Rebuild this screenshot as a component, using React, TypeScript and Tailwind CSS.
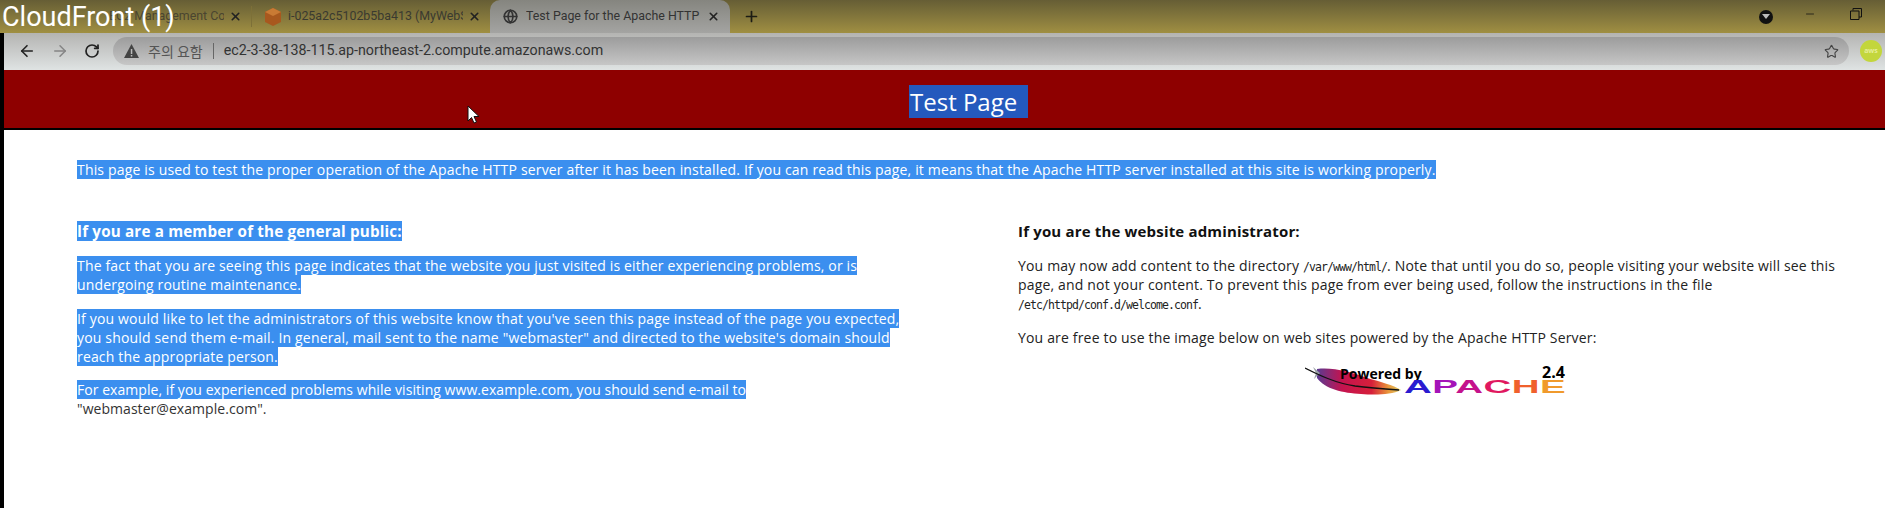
import React from "react";
import { ArrowLeft, ArrowRight, RotateCw, Star, X, Plus, Minus, Globe } from "lucide-react";

const sel = "bg-[#3b8fef] text-white";

function Feather() {
  return (
    <svg width="100" height="30" viewBox="0 0 100 30" className="absolute left-0 top-0">
      <defs>
        <linearGradient id="feather" x1="0" x2="1" y1="0" y2="0">
          <stop offset="0" stopColor="#5b3a92" />
          <stop offset="0.3" stopColor="#c4134f" />
          <stop offset="0.65" stopColor="#d6203a" />
          <stop offset="0.85" stopColor="#e9973a" />
          <stop offset="1" stopColor="#d8c868" />
        </linearGradient>
      </defs>
      <path d="M12 3 C28 1 46 6 62 12 C76 16 88 19 96 24 C86 29 70 29 56 28 C38 27 20 23 12 12 Z" fill="url(#feather)" />
      <path d="M8 1 L15 7 L9 13 L11 7 Z" fill="#9aa0a8" />
      <path d="M0 2 C14 9 30 17 50 20 C66 22 80 23 94 24" fill="none" stroke="#111" strokeWidth="1.3" />
    </svg>
  );
}

function ApacheLogo() {
  return (
    <div className="relative w-[262px] h-[30px] ml-[287px] mt-[19px]">
      <Feather />
      <span className="absolute left-[35px] top-[-1px] text-[14px] leading-[18px] font-bold tracking-normal text-black font-['Open_Sans',sans-serif]">Powered by</span>
      <span className="absolute left-[237px] top-[-3px] text-[16px] leading-[18px] font-bold tracking-normal text-black font-['Open_Sans',sans-serif]">2.4</span>
      <svg width="163" height="14" viewBox="0 0 163 14" className="absolute left-[99px] top-[14px]">
        <text x="0" y="13" fontFamily="Liberation Sans, sans-serif" fontWeight="700" fontSize="18" textLength="162" lengthAdjust="spacingAndGlyphs">
          <tspan fill="#2a1bd0">A</tspan>
          <tspan fill="#a414b8">P</tspan>
          <tspan fill="#c4128c">A</tspan>
          <tspan fill="#e01860">C</tspan>
          <tspan fill="#f0602c">H</tspan>
          <tspan fill="#f09a2c">E</tspan>
        </text>
      </svg>
    </div>
  );
}

export default function App() {
  const mono = "font-['DejaVu_Sans_Mono',monospace] text-[11.5px] leading-none tracking-[-0.92px]";
  return (
    <div className="relative w-full h-[508px] overflow-hidden bg-white flex flex-col font-['Open_Sans',sans-serif]">
      <div className="h-[33px] shrink-0 flex items-stretch bg-gradient-to-b from-[#665e35] to-[#a08f42] font-['Roboto',sans-serif] text-[12.4px] text-[#3a3a30]">
        <div className="w-[252px] flex items-center justify-end pr-[9px] border-r border-[#7d7038] my-[6px]">
          <span className="whitespace-nowrap overflow-hidden w-[115px] mr-[5px] text-right text-[#4a4530]">EC2 Management Co</span>
          <X size={13} strokeWidth={3} className="text-[#222]" />
        </div>
        <div className="w-[238px] flex items-center pl-[12px] pr-[9px]">
          <svg width="18" height="18" viewBox="0 0 18 18" className="shrink-0">
            <path d="M9 0 L17 4 V14 L9 18 L1 14 V4 Z" fill="#a8581e" />
            <path d="M9 0 L17 4 L9 8 L1 4 Z" fill="#c97a34" />
          </svg>
          <span className="ml-[6px] whitespace-nowrap overflow-hidden w-[175px]">i-025a2c5102b5ba413 (MyWebS</span>
          <X size={13} strokeWidth={3} className="ml-auto text-[#222]" />
        </div>
        <div className="w-[240px] flex items-center pl-[13px] pr-[10px] rounded-t-[10px] bg-gradient-to-b from-[#85857f] to-[#a4a4a2]">
          <Globe size={15} strokeWidth={2.6} className="text-[#333] shrink-0" />
          <span className="ml-[8px] whitespace-nowrap overflow-hidden w-[175px] text-[#333]">Test Page for the Apache HTTP</span>
          <X size={13} strokeWidth={3} className="ml-auto text-[#222]" />
        </div>
        <div className="flex items-center ml-[13px]">
          <Plus size={17} strokeWidth={2.4} className="text-[#1c1c14]" />
        </div>
        <div className="ml-auto flex items-center">
          <div className="w-[14px] h-[14px] rounded-full bg-[#111] flex items-center justify-center">
            <div className="w-0 h-0 border-l-[4px] border-r-[4px] border-t-[5px] border-l-transparent border-r-transparent border-t-[#bbb]" />
          </div>
          <Minus size={12} strokeWidth={1.5} className="ml-[31px] mb-[6px] text-[#111]" />
          <svg width="12" height="12" viewBox="0 0 12 12" className="ml-[34px] mr-[23px] mb-[6px]">
            <path d="M3 2.5 V0.5 H11.5 V9 H9 M0.5 3 H9 V11.5 H0.5 Z" fill="none" stroke="#111" strokeWidth="1" />
          </svg>
        </div>
      </div>
      <div className="flex-1 flex min-h-0">
        <div className="w-[4px] shrink-0 bg-black" />
        <div className="flex-1 flex flex-col min-w-0">
          <div className="h-[37px] shrink-0 flex items-start bg-gradient-to-b from-[#b4b4b2] to-[#dfe3e3]">
            <div className="flex items-center h-[36px] w-[109px] pl-[14px]">
              <ArrowLeft size={18} strokeWidth={2.2} className="text-[#222]" />
              <ArrowRight size={18} strokeWidth={2} className="ml-[15px] text-[#858585]" />
              <RotateCw size={16} strokeWidth={2.6} className="ml-[15px] text-[#222]" />
            </div>
            <div className="mt-[4px] h-[28px] w-[1736px] rounded-full bg-gradient-to-b from-[#9c9c9c] to-[#c6c6c6] flex items-center pl-[11px] pr-[10px] font-['Roboto',sans-serif]">
              <svg width="15" height="14" viewBox="0 0 15 14"><path d="M7.5 0 L15 14 H0 Z" fill="#444" /><rect x="6.8" y="5" width="1.5" height="5" fill="#bbb" /><rect x="6.8" y="11" width="1.5" height="1.5" fill="#bbb" /></svg>
              <span className="ml-[9px] text-[#555] font-['Noto_Sans_CJK_KR',sans-serif] text-[14px] leading-[20px]">주의 요함</span>
              <span className="ml-[10px] mr-[10px] w-px h-[16px] bg-[#666]" />
              <span className="text-[#333] text-[14.25px]">ec2-3-38-138-115.ap-northeast-2.compute.amazonaws.com</span>
              <Star size={15} strokeWidth={1.8} className="ml-auto text-[#444]" />
            </div>
            <div className="mt-[7px] ml-[11px] w-[22px] h-[22px] rounded-full bg-[#c3d63c] flex items-center justify-center text-[7px] font-bold text-[#e6ee9a]">aws</div>
          </div>
          <div className="h-[60px] shrink-0 bg-[#8e0000] border-b-2 border-black flex justify-center pt-[15px] pl-[48px]">
            <h1 className="h-[33px] text-[24px] leading-[34px] text-white bg-[#2459bd] w-[119px] pl-[1px] whitespace-nowrap">Test Page</h1>
          </div>
          <div className="flex-1 bg-white pl-[73px] pt-[30px] text-[14px] leading-[19px] text-[#333] tracking-[0.17px]">
            <p className="whitespace-nowrap"><span className={sel}>This page is used to test the proper operation of the Apache HTTP server after it has been installed. If you can read this page, it means that the Apache HTTP server installed at this site is working properly.</span></p>
            <div className="flex mt-[42px]">
              <div className="w-[941px] shrink-0 whitespace-nowrap">
                <h2 className="text-[15.2px] leading-[21px] font-bold"><span className={sel}>If you are a member of the general public:</span></h2>
                <p className="mt-[14px]"><span className={sel}>The fact that you are seeing this page indicates that the website you just visited is either experiencing problems, or is<br />undergoing routine maintenance.</span></p>
                <p className="mt-[15px]"><span className={sel}>If you would like to let the administrators of this website know that you've seen this page instead of the page you expected,<br />you should send them e-mail. In general, mail sent to the name "webmaster" and directed to the website's domain should<br />reach the appropriate person.</span></p>
                <p className="mt-[14px] tracking-[0.05px]"><span className={sel}>For example, if you experienced problems while visiting www.example.com, you should send e-mail to</span><br />"webmaster@example.com".</p>
              </div>
              <div className="whitespace-nowrap text-[#222]">
                <h2 className="text-[15px] leading-[21px] font-bold text-[#111]">If you are the website administrator:</h2>
                <p className="mt-[14px]">You may now add content to the directory <code className={mono}>/var/www/html/</code>. Note that until you do so, people visiting your website will see this<br />page, and not your content. To prevent this page from ever being used, follow the instructions in the file<br /><code className={mono}>/etc/httpd/conf.d/welcome.conf</code>.</p>
                <p className="mt-[15px]">You are free to use the image below on web sites powered by the Apache HTTP Server:</p>
                <ApacheLogo />
              </div>
            </div>
          </div>
        </div>
      </div>
      <span className="absolute left-[2px] top-[1px] text-[27px] leading-[32px] text-white font-['Roboto',sans-serif] whitespace-nowrap">CloudFront (1)</span>
      <svg width="14" height="20" viewBox="0 0 14 20" className="absolute left-[467px] top-[105px]">
        <path d="M1 1 V16 L4.5 12.5 L7 18 L9.5 17 L7 11.5 H12 Z" fill="#fff" stroke="#111" strokeWidth="1" />
      </svg>
    </div>
  );
}
